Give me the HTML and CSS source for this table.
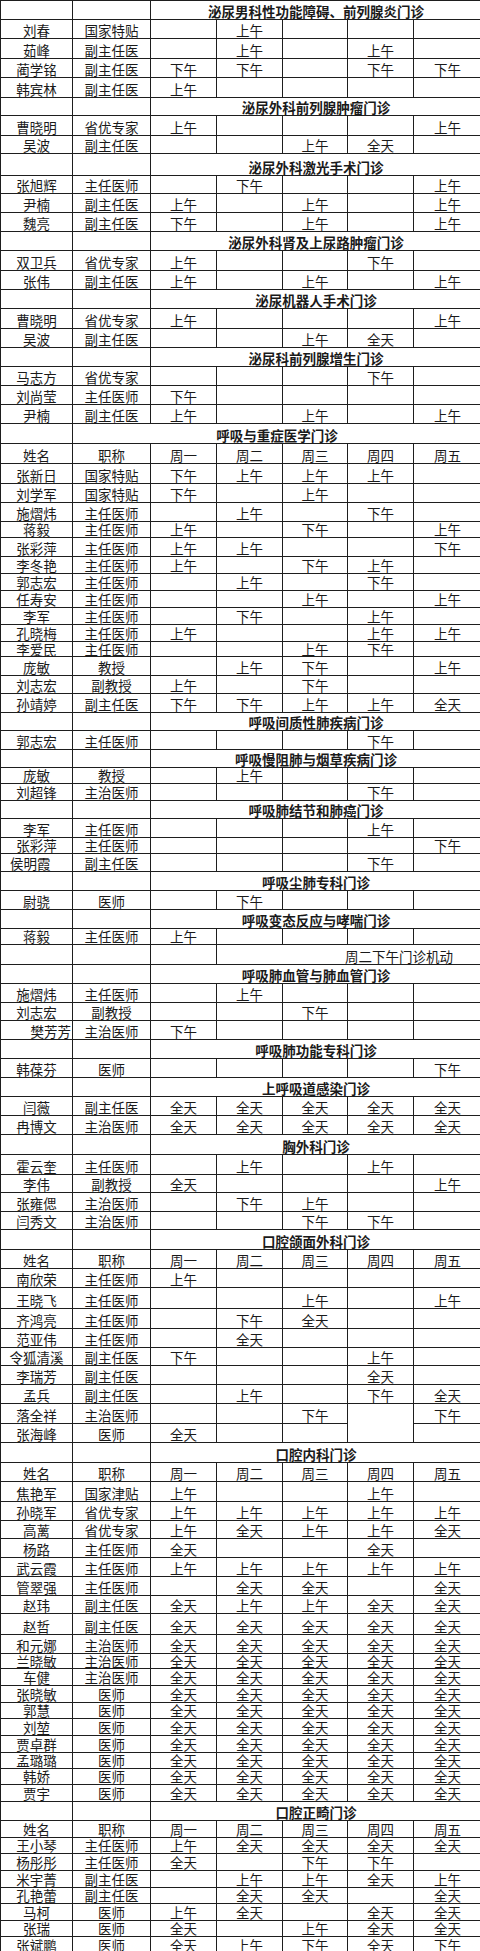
FILE: index.html
```html
<!DOCTYPE html>
<html lang="zh-CN">
<head>
<meta charset="utf-8">
<title>门诊排班表</title>
<link rel="stylesheet" href="styles.css">
</head>
<body>
<table class="sched">
<colgroup><col class="c-name"><col class="c-title"><col class="c-day"><col class="c-day"><col class="c-day3"><col class="c-day"><col class="c-day5"></colgroup>
<tbody>
<tr class="h19"><td></td><td></td><td colspan="5" class="sec">泌尿男科性功能障碍、前列腺炎门诊</td></tr>
<tr class="h19"><td>刘春</td><td>国家特贴</td><td></td><td>上午</td><td></td><td></td><td></td></tr>
<tr class="h20"><td>茹峰</td><td>副主任医</td><td></td><td>上午</td><td></td><td>上午</td><td></td></tr>
<tr class="h19"><td>蔺学铭</td><td>副主任医</td><td>下午</td><td>下午</td><td></td><td>下午</td><td>下午</td></tr>
<tr class="h20"><td>韩宾林</td><td>副主任医</td><td>上午</td><td></td><td></td><td></td><td></td></tr>
<tr class="h18"><td></td><td></td><td colspan="5" class="sec">泌尿外科前列腺肿瘤门诊</td></tr>
<tr class="h20"><td>曹晓明</td><td>省优专家</td><td>上午</td><td></td><td></td><td></td><td>上午</td></tr>
<tr class="h18"><td>吴波</td><td>副主任医</td><td></td><td></td><td>上午</td><td>全天</td><td></td></tr>
<tr class="h22"><td></td><td></td><td colspan="5" class="sec">泌尿外科激光手术门诊</td></tr>
<tr class="h18"><td>张旭辉</td><td>主任医师</td><td></td><td>下午</td><td></td><td></td><td>上午</td></tr>
<tr class="h19"><td>尹楠</td><td>副主任医</td><td>上午</td><td></td><td>上午</td><td></td><td>上午</td></tr>
<tr class="h19"><td>魏亮</td><td>副主任医</td><td>下午</td><td></td><td>上午</td><td></td><td>上午</td></tr>
<tr class="h19"><td></td><td></td><td colspan="5" class="sec">泌尿外科肾及上尿路肿瘤门诊</td></tr>
<tr class="h20"><td>双卫兵</td><td>省优专家</td><td>上午</td><td></td><td></td><td>下午</td><td></td></tr>
<tr class="h19"><td>张伟</td><td>副主任医</td><td>上午</td><td></td><td>上午</td><td></td><td>上午</td></tr>
<tr class="h19"><td></td><td></td><td colspan="5" class="sec">泌尿机器人手术门诊</td></tr>
<tr class="h20"><td>曹晓明</td><td>省优专家</td><td>上午</td><td></td><td></td><td></td><td>上午</td></tr>
<tr class="h19"><td>吴波</td><td>副主任医</td><td></td><td></td><td>上午</td><td>全天</td><td></td></tr>
<tr class="h19"><td></td><td></td><td colspan="5" class="sec">泌尿科前列腺增生门诊</td></tr>
<tr class="h19"><td>马志方</td><td>省优专家</td><td></td><td></td><td></td><td>下午</td><td></td></tr>
<tr class="h19"><td>刘尚莹</td><td>主任医师</td><td>下午</td><td></td><td></td><td></td><td></td></tr>
<tr class="h19"><td>尹楠</td><td>副主任医</td><td>上午</td><td></td><td>上午</td><td></td><td>上午</td></tr>
<tr class="h20"><td></td><td colspan="6" class="sec">呼吸与重症医学门诊</td></tr>
<tr class="h20"><td>姓名</td><td>职称</td><td>周一</td><td>周二</td><td>周三</td><td>周四</td><td>周五</td></tr>
<tr class="h20"><td>张新日</td><td>国家特贴</td><td>下午</td><td>上午</td><td>上午</td><td>上午</td><td></td></tr>
<tr class="h19"><td>刘学军</td><td>国家特贴</td><td>下午</td><td></td><td>上午</td><td></td><td></td></tr>
<tr class="h19"><td>施熠炜</td><td>主任医师</td><td></td><td>上午</td><td></td><td>下午</td><td></td></tr>
<tr class="h16"><td>蒋毅</td><td>主任医师</td><td>上午</td><td></td><td>下午</td><td></td><td>上午</td></tr>
<tr class="h19"><td>张彩萍</td><td>主任医师</td><td>上午</td><td>上午</td><td></td><td></td><td>下午</td></tr>
<tr class="h17"><td>李冬艳</td><td>主任医师</td><td>上午</td><td></td><td>下午</td><td>上午</td><td></td></tr>
<tr class="h17"><td>郭志宏</td><td>主任医师</td><td></td><td>上午</td><td></td><td>下午</td><td></td></tr>
<tr class="h17"><td>任寿安</td><td>主任医师</td><td></td><td></td><td>上午</td><td></td><td>上午</td></tr>
<tr class="h17"><td>李军</td><td>主任医师</td><td></td><td>下午</td><td></td><td>上午</td><td></td></tr>
<tr class="h17"><td>孔晓梅</td><td>主任医师</td><td>上午</td><td></td><td></td><td>上午</td><td>上午</td></tr>
<tr class="h14"><td>李爱民</td><td>主任医师</td><td></td><td></td><td>上午</td><td>下午</td><td></td></tr>
<tr class="h19"><td>庞敏</td><td>教授</td><td></td><td>上午</td><td>下午</td><td></td><td>上午</td></tr>
<tr class="h18"><td>刘志宏</td><td>副教授</td><td>上午</td><td></td><td>下午</td><td></td><td></td></tr>
<tr class="h19"><td>孙靖婷</td><td>副主任医</td><td>下午</td><td>下午</td><td>上午</td><td>上午</td><td>全天</td></tr>
<tr class="h18"><td></td><td></td><td colspan="5" class="sec">呼吸间质性肺疾病门诊</td></tr>
<tr class="h19"><td>郭志宏</td><td>主任医师</td><td></td><td></td><td></td><td>下午</td><td></td></tr>
<tr class="h18"><td></td><td></td><td colspan="5" class="sec">呼吸慢阻肺与烟草疾病门诊</td></tr>
<tr class="h16"><td>庞敏</td><td>教授</td><td></td><td>上午</td><td></td><td></td><td></td></tr>
<tr class="h17"><td>刘超锋</td><td>主治医师</td><td></td><td></td><td></td><td>下午</td><td></td></tr>
<tr class="h18"><td></td><td></td><td colspan="5" class="sec">呼吸肺结节和肺癌门诊</td></tr>
<tr class="h19"><td>李军</td><td>主任医师</td><td></td><td></td><td></td><td>上午</td><td></td></tr>
<tr class="h16"><td>张彩萍</td><td>主任医师</td><td></td><td></td><td></td><td></td><td>下午</td></tr>
<tr class="h18"><td class="left">侯明霞</td><td>副主任医</td><td></td><td></td><td></td><td>下午</td><td></td></tr>
<tr class="h19"><td></td><td></td><td colspan="5" class="sec">呼吸尘肺专科门诊</td></tr>
<tr class="h19"><td>尉骁</td><td>医师</td><td></td><td>下午</td><td></td><td></td><td></td></tr>
<tr class="h19"><td></td><td></td><td colspan="5" class="sec">呼吸变态反应与哮喘门诊</td></tr>
<tr class="h16"><td>蒋毅</td><td>主任医师</td><td>上午</td><td></td><td></td><td></td><td></td></tr>
<tr class="h20"><td></td><td></td><td></td><td colspan="4" class="note">周二下午门诊机动</td></tr>
<tr class="h19"><td></td><td></td><td colspan="5" class="sec">呼吸肺血管与肺血管门诊</td></tr>
<tr class="h19"><td>施熠炜</td><td>主任医师</td><td></td><td>上午</td><td></td><td></td><td></td></tr>
<tr class="h18"><td>刘志宏</td><td>副教授</td><td></td><td></td><td>下午</td><td></td><td></td></tr>
<tr class="h19"><td class="right">樊芳芳</td><td>主治医师</td><td>下午</td><td></td><td></td><td></td><td></td></tr>
<tr class="h19"><td></td><td></td><td colspan="5" class="sec">呼吸肺功能专科门诊</td></tr>
<tr class="h19"><td>韩葆芬</td><td>医师</td><td></td><td></td><td></td><td></td><td>下午</td></tr>
<tr class="h19"><td></td><td></td><td colspan="5" class="sec">上呼吸道感染门诊</td></tr>
<tr class="h19"><td>闫薇</td><td>副主任医</td><td>全天</td><td>全天</td><td>全天</td><td>全天</td><td>全天</td></tr>
<tr class="h19"><td>冉博文</td><td>主治医师</td><td>全天</td><td>全天</td><td>全天</td><td>全天</td><td>全天</td></tr>
<tr class="h20"><td></td><td></td><td colspan="5" class="sec">胸外科门诊</td></tr>
<tr class="h20"><td>霍云奎</td><td>主任医师</td><td></td><td>上午</td><td></td><td>上午</td><td></td></tr>
<tr class="h18"><td>李伟</td><td>副教授</td><td>全天</td><td></td><td></td><td></td><td>上午</td></tr>
<tr class="h19"><td>张雍偲</td><td>主治医师</td><td></td><td>下午</td><td>上午</td><td></td><td></td></tr>
<tr class="h18"><td>闫秀文</td><td>主治医师</td><td></td><td></td><td>下午</td><td>下午</td><td></td></tr>
<tr class="h20"><td></td><td></td><td colspan="5" class="sec">口腔颌面外科门诊</td></tr>
<tr class="h19"><td>姓名</td><td>职称</td><td>周一</td><td>周二</td><td>周三</td><td>周四</td><td>周五</td></tr>
<tr class="h19"><td>南欣荣</td><td>主任医师</td><td>上午</td><td></td><td></td><td></td><td></td></tr>
<tr class="h21"><td>王晓飞</td><td>主任医师</td><td></td><td></td><td>上午</td><td></td><td>上午</td></tr>
<tr class="h20"><td>齐鸿亮</td><td>主任医师</td><td></td><td>下午</td><td>全天</td><td></td><td></td></tr>
<tr class="h19"><td>范亚伟</td><td>主任医师</td><td></td><td>全天</td><td></td><td></td><td></td></tr>
<tr class="h18"><td>令狐清溪</td><td>副主任医</td><td>下午</td><td></td><td></td><td>上午</td><td></td></tr>
<tr class="h19"><td>李瑞芳</td><td>副主任医</td><td></td><td></td><td></td><td>全天</td><td></td></tr>
<tr class="h19"><td>孟兵</td><td>副主任医</td><td></td><td>上午</td><td></td><td>下午</td><td>全天</td></tr>
<tr class="h20"><td>落全祥</td><td>主治医师</td><td></td><td></td><td>下午</td><td rowspan="2"></td><td>下午</td></tr>
<tr class="h19"><td>张海峰</td><td>医师</td><td>全天</td><td></td><td></td><td></td></tr>
<tr class="h20"><td></td><td></td><td colspan="5" class="sec">口腔内科门诊</td></tr>
<tr class="h19"><td>姓名</td><td>职称</td><td>周一</td><td>周二</td><td>周三</td><td>周四</td><td>周五</td></tr>
<tr class="h20"><td>焦艳军</td><td>国家津贴</td><td>上午</td><td></td><td></td><td>上午</td><td></td></tr>
<tr class="h19"><td>孙晓军</td><td>省优专家</td><td>上午</td><td>上午</td><td>上午</td><td>上午</td><td>上午</td></tr>
<tr class="h18"><td>高蓠</td><td>省优专家</td><td>上午</td><td>全天</td><td>上午</td><td>上午</td><td>全天</td></tr>
<tr class="h19"><td>杨路</td><td>主任医师</td><td>全天</td><td></td><td></td><td>全天</td><td></td></tr>
<tr class="h19"><td>武云霞</td><td>主任医师</td><td>上午</td><td>上午</td><td>上午</td><td>上午</td><td>上午</td></tr>
<tr class="h19"><td>管翠强</td><td>主任医师</td><td></td><td>全天</td><td>全天</td><td></td><td>全天</td></tr>
<tr class="h18"><td>赵玮</td><td>副主任医</td><td>全天</td><td>上午</td><td>上午</td><td>全天</td><td>全天</td></tr>
<tr class="h21"><td>赵哲</td><td>副主任医</td><td>全天</td><td>全天</td><td>全天</td><td>全天</td><td>全天</td></tr>
<tr class="h19"><td>和元娜</td><td>主治医师</td><td>全天</td><td>全天</td><td>全天</td><td>全天</td><td>全天</td></tr>
<tr class="h15"><td>兰晓敏</td><td>主治医师</td><td>全天</td><td>全天</td><td>全天</td><td>全天</td><td>全天</td></tr>
<tr class="h17"><td>车健</td><td>主治医师</td><td>全天</td><td>全天</td><td>全天</td><td>全天</td><td>全天</td></tr>
<tr class="h17"><td>张晓敏</td><td>医师</td><td>全天</td><td>全天</td><td>全天</td><td>全天</td><td>全天</td></tr>
<tr class="h16"><td>郭慧</td><td>医师</td><td>全天</td><td>全天</td><td>全天</td><td>全天</td><td>全天</td></tr>
<tr class="h17"><td>刘堃</td><td>医师</td><td>全天</td><td>全天</td><td>全天</td><td>全天</td><td>全天</td></tr>
<tr class="h17"><td>贾卓群</td><td>医师</td><td>全天</td><td>全天</td><td>全天</td><td>全天</td><td>全天</td></tr>
<tr class="h16"><td>孟璐璐</td><td>医师</td><td>全天</td><td>全天</td><td>全天</td><td>全天</td><td>全天</td></tr>
<tr class="h16"><td>韩娇</td><td>医师</td><td>全天</td><td>全天</td><td>全天</td><td>全天</td><td>全天</td></tr>
<tr class="h17"><td>贾宇</td><td>医师</td><td>全天</td><td>全天</td><td>全天</td><td>全天</td><td>全天</td></tr>
<tr class="h19"><td></td><td></td><td colspan="5" class="sec">口腔正畸门诊</td></tr>
<tr class="h17"><td>姓名</td><td>职称</td><td>周一</td><td>周二</td><td>周三</td><td>周四</td><td>周五</td></tr>
<tr class="h16"><td>王小琴</td><td>主任医师</td><td>上午</td><td>全天</td><td>全天</td><td>全天</td><td>全天</td></tr>
<tr class="h17"><td>杨彤彤</td><td>主任医师</td><td>全天</td><td></td><td>下午</td><td>下午</td><td></td></tr>
<tr class="h17"><td>米宇菁</td><td>副主任医</td><td></td><td>上午</td><td>上午</td><td>全天</td><td>上午</td></tr>
<tr class="h16"><td>孔艳蕾</td><td>副主任医</td><td></td><td>全天</td><td>全天</td><td></td><td>全天</td></tr>
<tr class="h17"><td>马柯</td><td>医师</td><td>上午</td><td>全天</td><td></td><td>全天</td><td>全天</td></tr>
<tr class="h16"><td>张瑞</td><td>医师</td><td>全天</td><td></td><td>上午</td><td>全天</td><td>全天</td></tr>
<tr class="h17"><td>张斌鹏</td><td>医师</td><td>全天</td><td>上午</td><td>下午</td><td>全天</td><td>下午</td></tr>
</tbody>
</table>
</body>
</html>
```

FILE: styles.css
```css
html, body {
  margin: 0;
  padding: 0;
  background: #ffffff;
  overflow-x: hidden;
}

.sched {
  border-collapse: collapse;
  table-layout: fixed;
  width: 481px;
  font-family: "Noto Sans CJK SC", "Noto Sans", sans-serif;
  font-size: 13.5px;
  color: #1a1a1a;
}

.c-name { width: 72px; }
.c-title { width: 78px; }
.c-day { width: 66px; }
.c-day3 { width: 65px; }
.c-day5 { width: 68px; }

.sched td {
  border: 1px solid #1e1e1e;
  padding: 0 0 1px 0;
  line-height: 14px;
  text-align: center;
  vertical-align: bottom;
  white-space: nowrap;
}

.sched td.sec {
  font-weight: bold;
}

.sched td.note {
  text-align: right;
  padding-right: 28px;
}

.sched td.left {
  text-align: left;
  padding-left: 9px;
}

.sched td.right {
  text-align: right;
  padding-right: 1px;
}

.h14 { height: 14px; }
.h15 { height: 15px; }
.h16 { height: 16px; }
.h17 { height: 17px; }
.h18 { height: 18px; }
.h19 { height: 19px; }
.h20 { height: 20px; }
.h21 { height: 21px; }
.h22 { height: 22px; }

.h14 td, .h15 td { padding-bottom: 0; }
```
